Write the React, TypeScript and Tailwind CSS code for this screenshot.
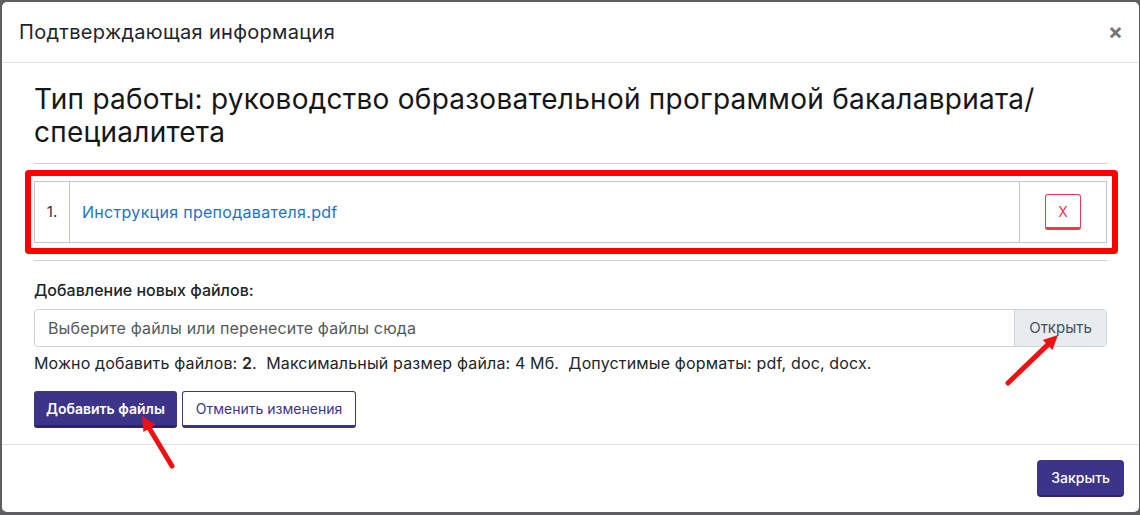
import React from "react";

const font = { fontFamily: "Inter, 'Noto Sans', sans-serif" };

function Arrow({ x1, y1, x2, y2 }: { x1: number; y1: number; x2: number; y2: number }) {
  // red annotation arrow, head at (x2, y2)
  const ang = Math.atan2(y2 - y1, x2 - x1);
  const len = 16;
  const spread = 0.45;
  const ax = x2 - len * Math.cos(ang - spread);
  const ay = y2 - len * Math.sin(ang - spread);
  const bx = x2 - len * Math.cos(ang + spread);
  const by = y2 - len * Math.sin(ang + spread);
  const mx = x2 - 11 * Math.cos(ang);
  const my = y2 - 11 * Math.sin(ang);
  return (
    <g>
      <line x1={x1} y1={y1} x2={mx} y2={my} stroke="#f01010" strokeWidth={5} strokeLinecap="round" />
      <polygon points={`${x2},${y2} ${ax},${ay} ${bx},${by}`} fill="#f01010" />
    </g>
  );
}

export default function App() {
  return (
    <div className="relative w-[1140px] h-[515px] overflow-hidden bg-[#5f5f63] pt-[2px] pl-[2px] pr-[1px]" style={font}>
      <div className="h-[510px] bg-white rounded-[5px] flex flex-col">
        {/* Header */}
        <div className="h-[61px] shrink-0 flex items-center justify-between pl-[17px] pr-[16px] border-b border-[#dee2e6]">
          <span className="text-[20px] text-[#212529] tracking-[0.3px]">Подтверждающая информация</span>
          <span className="text-[22px] leading-none font-bold text-[#777] -mt-[2px]">×</span>
        </div>

        {/* Body */}
        <div className="px-[32px] pt-[20px] pb-[16px] border-b border-[#dee2e6]">
          <h2 className="text-[28px] leading-[33px] text-[#161618] tracking-[0.25px] pb-[14px] border-b border-[#c9c9dc]">
            Тип работы: руководство образовательной программой бакалавриата/ специалитета
          </h2>

          <div className="relative my-[17px]">
            <div className="absolute -left-[9px] -right-[11px] -top-[11px] -bottom-[11px] border-[6px] border-[#ff0000] rounded-[4px] pointer-events-none" />
            <div className="flex h-[62px] border border-[#c3c3dc]">
              <div className="w-[35px] shrink-0 flex items-center justify-center text-[15px] text-[#333] border-r border-[#c3c3dc]">1.</div>
              <div className="flex-1 flex items-center pl-[12px] text-[16px] tracking-[0.3px] text-[#1f72c8]">Инструкция преподавателя.pdf</div>
              <div className="w-[87px] shrink-0 flex items-center justify-center border-l border-[#c3c3dc]">
                <div className="w-[36px] h-[36px] flex items-center justify-center border border-b-[3px] border-[#f2364f] rounded-[3px] text-[14px] text-[#f2364f]">X</div>
              </div>
            </div>
          </div>

          <div className="border-t border-[#c9c9dc] pt-[19px]">
            <div className="text-[16px] font-medium text-[#212529] leading-[20px]">Добавление новых файлов:</div>
            <div className="mt-[9px] flex h-[38px] border border-[#ced4da] rounded-[4px] overflow-hidden">
              <div className="flex-1 flex items-center pl-[13px] text-[16px] tracking-[0.15px] text-[#55595e]">Выберите файлы или перенесите файлы сюда</div>
              <div className="w-[92px] shrink-0 flex items-center justify-center bg-[#e9ecef] border-l border-[#ced4da] text-[15px] text-[#495057]">Открыть</div>
            </div>
            <div className="mt-[6px] text-[16px] tracking-[0.15px] text-[#212529] leading-[20px] whitespace-pre">
              Можно добавить файлов: <b className="font-semibold">2</b>.  Максимальный размер файла: 4 Мб.  Допустимые форматы: pdf, doc, docx.
            </div>
            <div className="mt-[18px] flex gap-[5px]">
              <button className="h-[37px] px-[12px] rounded-[3px] bg-[#3c3489] border-b-[3px] border-[#2a246a] text-white text-[14px] font-semibold">Добавить файлы</button>
              <button className="h-[37px] px-[13px] rounded-[3px] bg-white border border-b-[3px] border-[#3c3489] text-[#3c3489] text-[14px]">Отменить изменения</button>
            </div>
          </div>
        </div>

        {/* Footer */}
        <div className="flex-1 flex items-center justify-end pr-[15px]">
          <button className="h-[37px] px-[14px] rounded-[4px] bg-[#3c3489] border-b-[2px] border-[#2a246a] text-white text-[14px] font-medium">Закрыть</button>
        </div>
      </div>

      {/* annotation arrows */}
      <svg className="absolute left-0 top-0 pointer-events-none" width={1140} height={515}>
        <Arrow x1={1008} y1={383} x2={1058} y2={335} />
        <Arrow x1={172} y1={466} x2={142} y2={416} />
      </svg>
    </div>
  );
}
